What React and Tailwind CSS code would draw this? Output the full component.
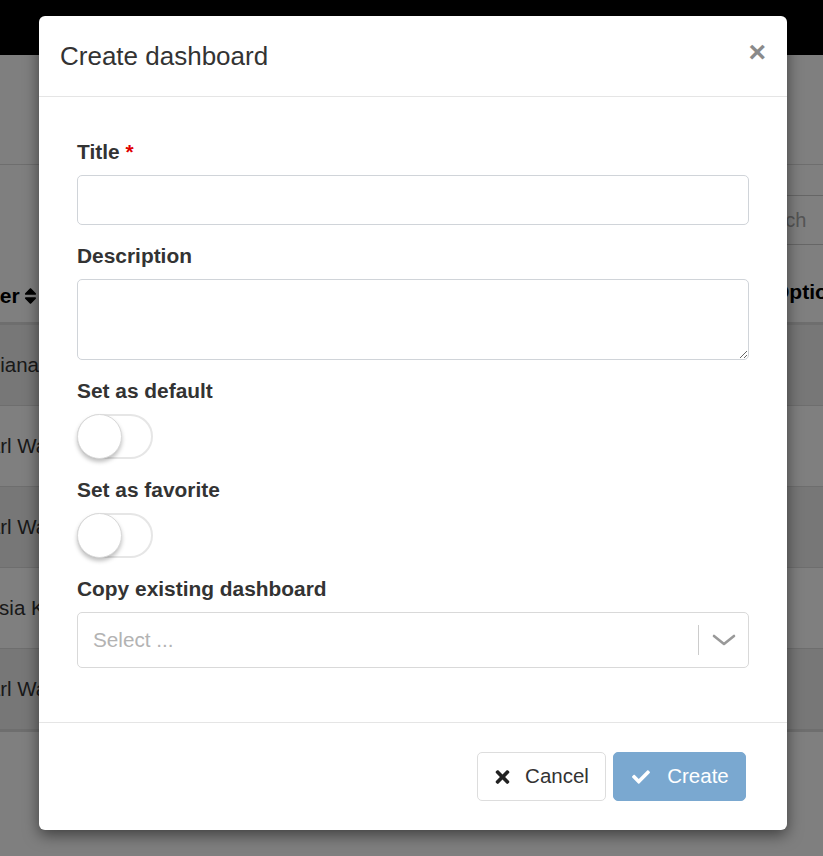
import React from 'react';
import { FaSort, FaCheck, FaTimes } from 'react-icons/fa';

const rows = [
    { name: 'Juliana Mendes', shade: true },
    { name: 'Carl Walker', shade: false },
    { name: 'Carl Walker', shade: true },
    { name: 'Kasia Kowalska', shade: false },
    { name: 'Carl Walker', shade: true },
];

const Field = ({ label, required, children }) => (
    <div className="flex flex-col">
        <label className="h-[28px] leading-[28px] mb-[9px] text-[20.9px] font-bold text-[#333]">
            {label}
            {required && <span className="text-[#e00000] ml-[6px]">*</span>}
        </label>
        {children}
    </div>
);

const Toggle = () => (
    <div className="relative w-[76px] h-[45px]">
        <div className="absolute inset-0 rounded-full border-2 border-[#e6e6e6] bg-white" />
        <div className="absolute left-0 top-0 w-[45px] h-[45px] rounded-full bg-white border border-[#d9d9d9] shadow-[0_3px_4px_rgba(0,0,0,0.25)]" />
    </div>
);

const Background = () => (
    <div className="w-full min-h-[856px] bg-white text-[#333]">
        <div className="h-[55px] bg-black" />
        <div className="h-[110px] border-b border-[#dddddd]" />
        <div className="h-[105px] relative">
            <div className="absolute left-[730px] top-[30px] w-[200px] h-[50px] border border-[#cccccc] rounded-[4px] flex items-center pl-[12px] text-[20px] text-[#aaaaaa]">
                Search
            </div>
        </div>
        <div className="h-[55px] border-b-[3px] border-[#dddddd] flex justify-between font-bold text-[21px] text-[#000]">
            <div className="-ml-[27px] pt-[8px] leading-[28px] flex items-center gap-[4px] h-[44px]">
                User <FaSort className="w-[13px] h-[20px]" />
            </div>
            <div className="pt-[8px] leading-[28px] w-[50px] overflow-hidden whitespace-nowrap">Options</div>
        </div>
        {rows.map((r, i) => (
            <div
                key={i}
                className={`h-[81px] border-b border-[#dddddd] flex items-center text-[20.5px] ${r.shade ? 'bg-[#eeeeee]' : 'bg-white'}`}
            >
                <span className="-ml-[26px] whitespace-nowrap">{r.name}</span>
            </div>
        ))}
        <div className="border-t-2 border-[#dddddd]" />
    </div>
);

export default function App() {
    return (
        <div className="relative w-full min-h-[856px] overflow-hidden font-[family-name:Liberation_Sans,Arial,sans-serif]">
            <Background />
            <div className="absolute inset-0 bg-black/50" />

            <div className="absolute left-[39px] top-[16px] w-[748px] bg-white rounded-[6px] shadow-[0_5px_15px_rgba(0,0,0,0.5)]">
                <div className="h-[81px] border-b border-[#e5e5e5] flex items-center justify-between px-[21px]">
                    <h4 className="text-[26px] text-[#333] leading-none">Create dashboard</h4>
                    <button className="text-[30px] font-bold text-[#8a8a8a] leading-none -mt-[8px]">×</button>
                </div>

                <div className="px-[38px] pt-[41px] pb-[54px] flex flex-col gap-[17px]">
                    <Field label="Title" required>
                        <input className="h-[50px] w-full border border-[#d0d4d9] rounded-[5px] px-[12px] text-[20px] outline-none" />
                    </Field>
                    <Field label="Description">
                        <textarea className="h-[81px] w-full border border-[#d0d4d9] rounded-[5px] px-[12px] py-[8px] text-[20px] outline-none" />
                    </Field>
                    <Field label="Set as default">
                        <Toggle />
                    </Field>
                    <Field label="Set as favorite">
                        <Toggle />
                    </Field>
                    <Field label="Copy existing dashboard">
                        <div className="h-[56px] w-full border border-[#d9d9d9] rounded-[5px] flex items-center">
                            <span className="flex-1 pl-[15px] text-[20.7px] text-[#b3b3b3]">Select ...</span>
                            <span className="w-px h-[30px] bg-[#cccccc]" />
                            <span className="w-[49px] flex justify-center">
                                <svg width="24" height="12" viewBox="0 0 24 12" fill="none">
                                    <path d="M2 2 L12 10 L22 2" stroke="#999" strokeWidth="2.6" strokeLinecap="round" strokeLinejoin="round" />
                                </svg>
                            </span>
                        </div>
                    </Field>
                </div>

                <div className="border-t border-[#e5e5e5] pt-[29px] pb-[29px] pr-[41px] flex justify-end gap-[7px]">
                    <button className="h-[49px] w-[129px] border border-[#dddddd] rounded-[5px] bg-white flex items-center justify-center gap-[14px] text-[20.5px] text-[#333]">
                        <FaTimes className="w-[17px] h-[20px] text-[#222]" />
                        Cancel
                    </button>
                    <button className="h-[49px] w-[133px] border border-[#7aa8d0] rounded-[5px] bg-[#7aa8d0] flex items-center justify-center gap-[15px] text-[20.5px] text-white">
                        <FaCheck className="w-[22px] h-[18px]" />
                        Create
                    </button>
                </div>
            </div>
        </div>
    );
}
